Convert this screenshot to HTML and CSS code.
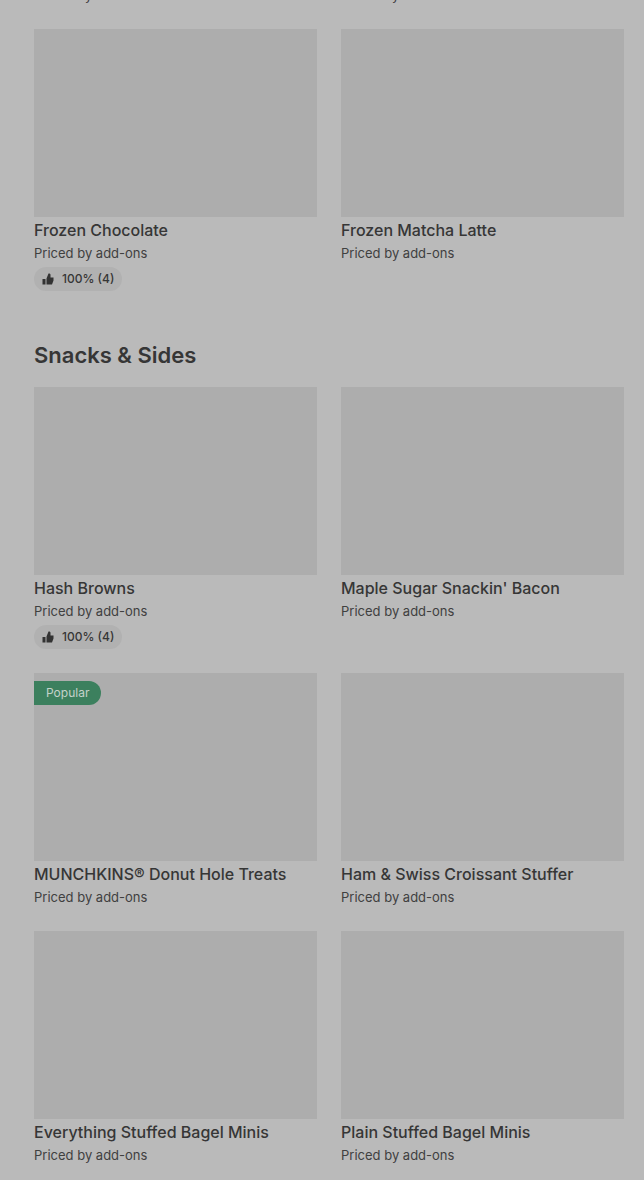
FILE: index.html
```html
<!DOCTYPE html>
<html lang="en">
<head>
  <meta charset="UTF-8">
  <meta name="viewport" content="width=device-width, initial-scale=1.0">
  <title>Menu</title>
  <link rel="stylesheet" href="styles.css">
</head>
<body>
  <svg class="sprite" aria-hidden="true">
    <symbol id="thumb" viewBox="0 0 24 24">
      <path d="M1 12h6v11H1zM9 23V11l4-10h1c2 0 3 1 3 3v5h6v6l-3 8z"/>
    </symbol>
  </svg>

  <main class="menu">
    <!-- end of the row above, scrolled past -->
    <div class="grid scrolled">
      <p class="price">Priced by add-ons</p>
      <p class="price">Priced by add-ons</p>
    </div>

    <section class="grid">
      <article class="item">
        <div class="photo"></div>
        <h3 class="name">Frozen Chocolate</h3>
        <p class="price">Priced by add-ons</p>
        <div class="rating"><svg class="icon"><use href="#thumb"/></svg>100% (4)</div>
      </article>
      <article class="item">
        <div class="photo"></div>
        <h3 class="name">Frozen Matcha Latte</h3>
        <p class="price">Priced by add-ons</p>
      </article>
    </section>

    <h2 class="heading">Snacks &amp; Sides</h2>
    <section class="grid">
      <article class="item">
        <div class="photo"></div>
        <h3 class="name">Hash Browns</h3>
        <p class="price">Priced by add-ons</p>
        <div class="rating"><svg class="icon"><use href="#thumb"/></svg>100% (4)</div>
      </article>
      <article class="item">
        <div class="photo"></div>
        <h3 class="name">Maple Sugar Snackin' Bacon</h3>
        <p class="price">Priced by add-ons</p>
      </article>
      <article class="item">
        <div class="photo"><span class="badge">Popular</span></div>
        <h3 class="name">MUNCHKINS® Donut Hole Treats</h3>
        <p class="price">Priced by add-ons</p>
      </article>
      <article class="item">
        <div class="photo"></div>
        <h3 class="name">Ham &amp; Swiss Croissant Stuffer</h3>
        <p class="price">Priced by add-ons</p>
      </article>
      <article class="item">
        <div class="photo"></div>
        <h3 class="name">Everything Stuffed Bagel Minis</h3>
        <p class="price">Priced by add-ons</p>
      </article>
      <article class="item">
        <div class="photo"></div>
        <h3 class="name">Plain Stuffed Bagel Minis</h3>
        <p class="price">Priced by add-ons</p>
      </article>
    </section>
  </main>
</body>
</html>
```

FILE: styles.css
```css
body {
  margin: 0;
  background-color: #bababa;
  color: #363636;
  font-family: Inter, "Liberation Sans", sans-serif;
}

.sprite {
  display: none;
}

.menu {
  padding: 0 20px 0 34px;
  overflow: hidden;
}

.grid {
  display: grid;
  grid-template-columns: 1fr 1fr;
  gap: 24px;
}

.scrolled {
  margin-top: -15px;
  margin-bottom: 24px;
}

.photo {
  position: relative;
  aspect-ratio: 283 / 188;
  background-color: #adadad;
}

.name {
  margin: 1px 0;
  font-size: 16px;
  font-weight: 500;
  line-height: 24px;
}

.price {
  margin: 0;
  font-size: 13px;
  line-height: 20px;
  color: #404040;
}

.rating {
  display: inline-flex;
  align-items: center;
  gap: 8px;
  height: 24px;
  margin-top: 4px;
  padding: 0 8px;
  border-radius: 12px;
  background-color: #b1b1b1;
  font-size: 12px;
  font-weight: 500;
  line-height: 24px;
  vertical-align: top;
}

.icon {
  width: 12px;
  height: 12px;
  fill: #333;
}

.heading {
  margin: 48px 0 16px;
  font-size: 22px;
  font-weight: 600;
  line-height: 32px;
}

.badge {
  position: absolute;
  top: 8px;
  left: 0;
  padding: 0 12px;
  border-radius: 0 12px 12px 0;
  background-color: #3c805e;
  color: #c4d2ca;
  font-size: 12px;
  line-height: 24px;
}
```
